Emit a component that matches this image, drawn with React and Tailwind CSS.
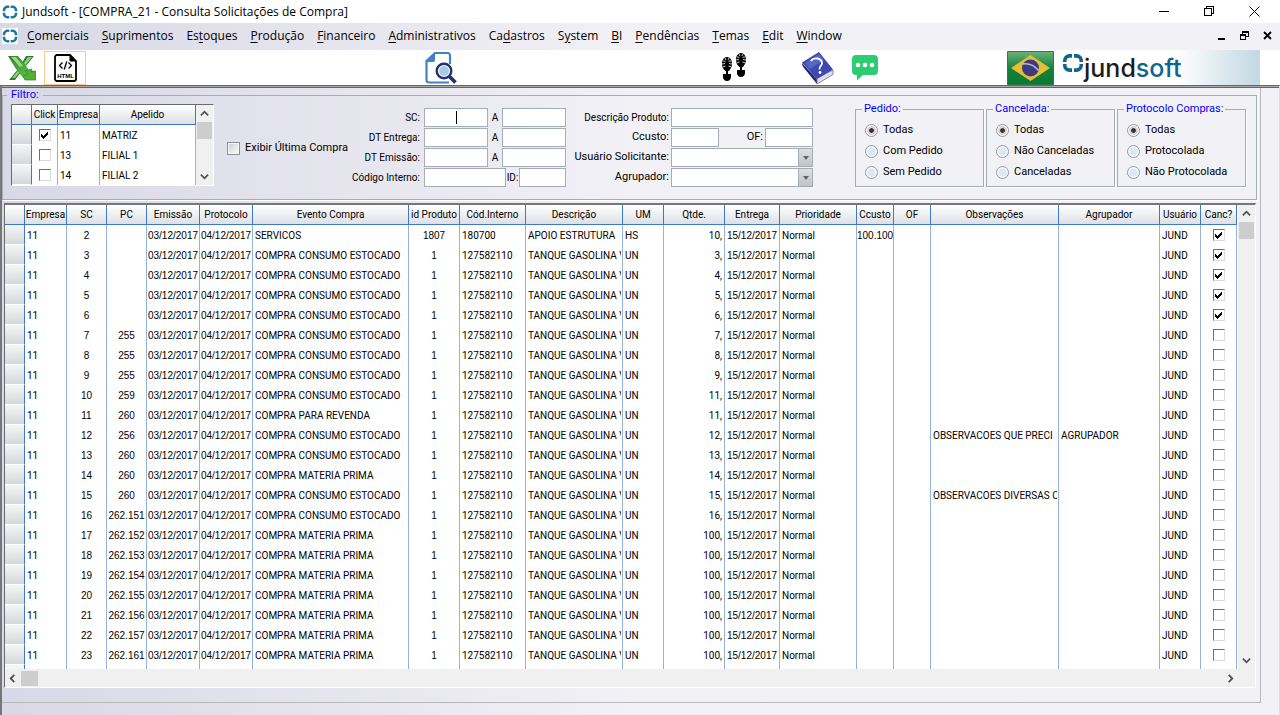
import { useState } from "react";
import clsx from "clsx";

const MENUS = [
  ["", "C", "omerciais"],
  ["", "S", "uprimentos"],
  ["Es", "t", "oques"],
  ["", "P", "rodução"],
  ["", "F", "inanceiro"],
  ["", "A", "dministrativos"],
  ["Ca", "d", "astros"],
  ["S", "y", "stem"],
  ["", "B", "I"],
  ["", "P", "endências"],
  ["", "T", "emas"],
  ["", "E", "dit"],
  ["", "W", "indow"],
];

// figures use the narrower digits of Liberation Sans
const NUM = "text-center font-['Liberation_Sans',sans-serif]";

const COLUMNS = [
  { key: "empresa", label: "Empresa", col: "w-[42px]" },
  { key: "sc", label: "SC", col: "w-[40px]", cell: NUM },
  { key: "pc", label: "PC", col: "w-[40px]", cell: NUM },
  { key: "emissao", label: "Emissão", col: "w-[53px]", cell: NUM },
  { key: "protocolo", label: "Protocolo", col: "w-[53px]", cell: NUM },
  { key: "evento", label: "Evento Compra", col: "w-[156px]" },
  { key: "produto", label: "id Produto", col: "w-[51px]", cell: NUM },
  { key: "codigo", label: "Cód.Interno", col: "w-[66px]" },
  { key: "descricao", label: "Descrição", col: "w-[97px]" },
  { key: "um", label: "UM", col: "w-[41px]" },
  { key: "qtde", label: "Qtde.", col: "w-[61px]", cell: "text-right pr-[2px]" },
  { key: "entrega", label: "Entrega", col: "w-[55px]", cell: NUM },
  { key: "prioridade", label: "Prioridade", col: "w-[77px]" },
  { key: "ccusto", label: "Ccusto", col: "w-[37px]", cell: NUM },
  { key: "of", label: "OF", col: "w-[37px]" },
  { key: "obs", label: "Observações", col: "w-[128px]" },
  { key: "agrupador", label: "Agrupador", col: "w-[101px]" },
  { key: "usuario", label: "Usuário", col: "w-[41px]" },
];

const CONSUMO = "COMPRA CONSUMO ESTOCADO";
const MATERIA = "COMPRA MATERIA PRIMA";

const base = {
  empresa: "11",
  emissao: "03/12/2017",
  protocolo: "04/12/2017",
  produto: "1",
  codigo: "127582110",
  descricao: "TANQUE GASOLINA V",
  um: "UN",
  entrega: "15/12/2017",
  prioridade: "Normal",
  usuario: "JUND",
};

const ROWS = [
  { sc: 2, evento: "SERVICOS", produto: "1807", codigo: "180700", descricao: "APOIO ESTRUTURA", um: "HS", qtde: "10,", ccusto: "100.100", canc: true },
  { sc: 3, evento: CONSUMO, qtde: "3,", canc: true },
  { sc: 4, evento: CONSUMO, qtde: "4,", canc: true },
  { sc: 5, evento: CONSUMO, qtde: "5,", canc: true },
  { sc: 6, evento: CONSUMO, qtde: "6,", canc: true },
  { sc: 7, pc: "255", evento: CONSUMO, qtde: "7," },
  { sc: 8, pc: "255", evento: CONSUMO, qtde: "8," },
  { sc: 9, pc: "255", evento: CONSUMO, qtde: "9," },
  { sc: 10, pc: "259", evento: CONSUMO, qtde: "11," },
  { sc: 11, pc: "260", evento: "COMPRA PARA REVENDA", qtde: "11," },
  { sc: 12, pc: "256", evento: CONSUMO, qtde: "12,", obs: "OBSERVACOES QUE PRECI", agrupador: "AGRUPADOR" },
  { sc: 13, pc: "260", evento: CONSUMO, qtde: "13," },
  { sc: 14, pc: "260", evento: MATERIA, qtde: "14," },
  { sc: 15, pc: "260", evento: CONSUMO, qtde: "15,", obs: "OBSERVACOES DIVERSAS C" },
  { sc: 16, pc: "262.151", evento: CONSUMO, qtde: "16," },
  { sc: 17, pc: "262.152", evento: MATERIA, qtde: "100," },
  { sc: 18, pc: "262.153", evento: MATERIA, qtde: "100," },
  { sc: 19, pc: "262.154", evento: MATERIA, qtde: "100," },
  { sc: 20, pc: "262.155", evento: MATERIA, qtde: "100," },
  { sc: 21, pc: "262.156", evento: MATERIA, qtde: "100," },
  { sc: 22, pc: "262.157", evento: MATERIA, qtde: "100," },
  { sc: 23, pc: "262.161", evento: MATERIA, qtde: "100," },
].map((r) => ({ ...base, ...r }));

const EMPRESAS = [
  { id: "11", apelido: "MATRIZ", checked: true },
  { id: "13", apelido: "FILIAL 1" },
  { id: "14", apelido: "FILIAL 2" },
];

const TH =
  "h-5 overflow-hidden whitespace-nowrap border-r border-b border-[#3f78c4] bg-linear-to-b from-white to-[#dde0e4] p-0 text-center font-normal";
const GUTTER =
  "h-5 border-r border-b border-r-[#3f78c4] border-b-white bg-linear-to-b from-[#f4f5f6] to-[#d4d7dc] p-0";
const TD = "h-5 overflow-hidden whitespace-nowrap border-r border-[#94b3dc]";
const INPUT = "h-[19px] border border-[#a4adb5] bg-white px-1 text-[11px] outline-none";

function JundMark({ className }) {
  return (
    <svg viewBox="0 0 16 16" className={className} fill="none" stroke="currentColor" strokeWidth="2.6">
      <path d="M7.300 2.800H5.500a3.500 3.500 0 0 0-3.500 3.500V7.300M8.700 2.800h1.800A3.500 3.500 0 0 1 14 6.300v1M7.300 13.200H5.500A3.500 3.500 0 0 1 2 9.700V8.700M8.700 13.200h1.800A3.500 3.500 0 0 0 14 9.700V8.700" />
    </svg>
  );
}

function CheckCell({ label, checked }) {
  const [on, setOn] = useState(!!checked);
  return (
    <span className="grid justify-center">
      <input
        type="checkbox"
        aria-label={label}
        checked={on}
        onChange={(e) => setOn(e.target.checked)}
        className="peer col-start-1 row-start-1 size-3 appearance-none border border-t-[#707070] border-r-[#dcdcdc] border-b-[#dcdcdc] border-l-[#707070] bg-white"
      />
      <svg
        viewBox="0 0 8 8"
        shapeRendering="crispEdges"
        className="pointer-events-none invisible col-start-1 row-start-1 size-2 place-self-center peer-checked:visible"
      >
        <path d="M0 3h1v1h1v1h1v-1h1v-1h1v-1h1v-1h1v3h-1v1h-1v1h-1v1h-1v1h-1v-1h-1v-1h-1z" fill="#000" />
      </svg>
    </span>
  );
}

function Arrow({ dir }) {
  const d = {
    up: "M1 7l4-4 4 4",
    down: "M1 3l4 4 4-4",
    left: "M7 1L3 5l4 4",
    right: "M3 1l4 4-4 4",
  }[dir];
  return (
    <svg viewBox="0 0 10 10" className="size-[9px]" fill="none" stroke="#505050" strokeWidth="2">
      <path d={d} />
    </svg>
  );
}

function VScroll() {
  return (
    <div className="flex w-[17px] shrink-0 flex-col items-center bg-[#f0f0f0]">
      <button type="button" aria-label="Rolar para cima" className="flex h-[17px] items-center">
        <Arrow dir="up" />
      </button>
      <div className="h-[17px] w-[15px] bg-[#cdcdcd]" />
      <button type="button" aria-label="Rolar para baixo" className="mt-auto flex h-[17px] items-center">
        <Arrow dir="down" />
      </button>
    </div>
  );
}

function TitleBar() {
  return (
    <header className="flex h-[23px] items-center bg-white pr-5 pl-[2px] text-[12px]">
      <JundMark className="size-4 text-[#1b7a9b]" />
      <h1 className="ml-1 grow">Jundsoft - [COMPRA_21 - Consulta Solicitações de Compra]</h1>
      <div className="flex items-center gap-[34px]">
        <button type="button" aria-label="Minimizar">
          <svg viewBox="0 0 11 11" className="size-[11px]" shapeRendering="crispEdges">
            <path d="M0 5h10v1H0z" />
          </svg>
        </button>
        <button type="button" aria-label="Restaurar">
          <svg viewBox="0 0 11 11" className="size-[11px]" fill="none" stroke="#000" shapeRendering="crispEdges">
            <path d="M.5 2.500h7v7h-7zM2.500 2.500v-2h7v7h-2" />
          </svg>
        </button>
        <button type="button" aria-label="Fechar">
          <svg viewBox="0 0 11 11" className="size-[11px]" fill="none" stroke="#000">
            <path d="M.5.5l10 10M10.500.5l-10 10" />
          </svg>
        </button>
      </div>
    </header>
  );
}

function MenuBar() {
  return (
    <nav className="flex h-[27px] items-center bg-linear-to-r from-[#d8d8e6] to-[#f2f1f6] to-50% pr-2 pb-[2px] pl-[2px] text-[12px]">
      <JundMark className="size-4 bg-white text-[#1b7a9b]" />
      <div className="flex grow gap-[13px] pl-[9px]">
        {MENUS.map(([pre, key, post]) => (
          <button type="button" key={pre + key + post}>
            {pre}
            <u className="underline-offset-2">{key}</u>
            {post}
          </button>
        ))}
      </div>
      <div className="flex items-center gap-[14px]">
        <button type="button" aria-label="Minimizar janela">
          <svg viewBox="0 0 9 9" className="size-[9px]" shapeRendering="crispEdges">
            <path d="M1 7h7v2H1z" />
          </svg>
        </button>
        <button type="button" aria-label="Restaurar janela">
          <svg viewBox="0 0 9 9" className="size-[9px]" shapeRendering="crispEdges">
            <path d="M2 0h7v6H6v3H0V3h2zM3 2v1h3v2h2V2zM1 5v3h4V5z" fillRule="evenodd" />
          </svg>
        </button>
        <button type="button" aria-label="Fechar janela">
          <svg viewBox="0 0 9 9" className="size-[9px]" fill="none" stroke="#000" strokeWidth="1.800">
            <path d="M1 1l7 7M8 1L1 8" />
          </svg>
        </button>
      </div>
    </nav>
  );
}

function ExcelIcon() {
  return (
    <svg viewBox="0 0 28 26" className="h-[26px] w-7">
      <defs>
        <linearGradient id="xl" x1="0" y1="0" x2="1" y2="1">
          <stop offset="0" stopColor="#2f7d32" />
          <stop offset=".55" stopColor="#4fae3c" />
          <stop offset="1" stopColor="#6cc544" />
        </linearGradient>
      </defs>
      <path d="M18 1h8l-9 11-7 9-3 4H1l10-12z" fill="#2c7f33" />
      <path d="M20 2h4l-9 11-8 10H4l9-11z" fill="#8fcf78" />
      <path d="M0 1h10l6 7 5 7 6 1v9H17L8 14z" fill="url(#xl)" />
      <path d="M3 2h5l7 9-3 1z" fill="#9ad684" />
      <path d="M17 16l7-2-1 3 5-1v9H17l-2-4 5-2z" fill="#52b03a" stroke="#2b8a2e" strokeWidth=".7" />
    </svg>
  );
}

function HtmlIcon() {
  return (
    <svg viewBox="0 0 23 28" className="h-7 w-[23px]">
      <path d="M3 1h13l6 6v18a2 2 0 0 1-2 2H3a2 2 0 0 1-2-2V3a2 2 0 0 1 2-2z" fill="#fff" stroke="#000" strokeWidth="1.800" />
      <path d="M16 1v6h6z" fill="#000" stroke="#000" />
      <path d="M8.500 8.500L5.500 11.500l3 3M14.500 8.500l3 3-3 3M12.800 7.500l-2.600 8" fill="none" stroke="#000" strokeWidth="1.300" />
      <text x="11.500" y="23.500" textAnchor="middle" fontSize="6" fontWeight="bold" fontFamily="Liberation Sans, sans-serif">
        HTML
      </text>
    </svg>
  );
}

function SearchDocIcon() {
  return (
    <svg viewBox="0 0 32 32" className="size-8" fill="none">
      <path d="M25 12V3.500A2.500 2.500 0 0 0 22.500 1H10L1.500 9v19A2.500 2.500 0 0 0 4 30.500h20" stroke="#3f83c5" strokeWidth="2.200" />
      <path d="M10 1L1 10h7a2 2 0 0 0 2-2z" fill="#3f83c5" />
      <circle cx="19" cy="19" r="7.300" fill="#fff" stroke="#27316b" strokeWidth="2.400" />
      <circle cx="19" cy="19" r="5" fill="#a5cbe9" />
      <path d="M24.500 24.500l6 6" stroke="#27316b" strokeWidth="3.800" />
    </svg>
  );
}

function Foot() {
  return (
    <g>
      <path d="M5 0c3 0 5 3 5 7 0 3-1 4-3 7H3.500C1 12 0 10 0 7c0-4 2-7 5-7z" fill="#000" />
      <path d="M.5 10l3-1M0 7l3-.5M1 4l2.500.3M3 1l1 2M9.500 10l-3-1M10 7L7 6.500M9 4l-2.500.3M7 1L6 3" stroke="#fff" strokeWidth=".8" />
      <path d="M4 12h2v5h3v3c0 2-1.500 4-4 4s-4-2-4-4v-3h3z" fill="#000" />
    </g>
  );
}

function FeetIcon() {
  return (
    <svg viewBox="0 0 25 29" className="h-[29px] w-[25px]">
      <g transform="translate(0 4)">
        <Foot />
      </g>
      <g transform="translate(14 0)">
        <Foot />
      </g>
    </svg>
  );
}

function BookIcon() {
  return (
    <svg viewBox="0 0 32 32" className="size-8">
      <path d="M0 11l15 16v5L2 16c-1-1-2-3-2-5z" fill="#23286f" />
      <path d="M15 26l16-8v4.500L15 32z" fill="#dcdde8" stroke="#6d70a0" strokeWidth=".8" />
      <path d="M0 10.500L17 0l14 17.500L15 27z" fill="#3d49b0" />
      <path d="M3 11L17 2l5 6L8 17z" fill="#6c78d0" opacity=".6" />
      <path d="M9 9c1-2 4-3 6.500-2.500s5 2.500 4.500 5-3 3-2.500 6" fill="none" stroke="#fff" strokeWidth="1.800" />
      <circle cx="18" cy="20.500" r="1.400" fill="#fff" />
    </svg>
  );
}

function ChatIcon() {
  return (
    <svg viewBox="0 0 26 26" className="size-[26px]">
      <path d="M4 0h18a4 4 0 0 1 4 4v12a4 4 0 0 1-4 4H11l-6 5.500V20H4a4 4 0 0 1-4-4V4a4 4 0 0 1 4-4z" fill="#2ecc71" />
      <g fill="#fff">
        <circle cx="6" cy="10" r="2.300" />
        <circle cx="13" cy="10" r="2.300" />
        <circle cx="20" cy="10" r="2.300" />
      </g>
    </svg>
  );
}

function FlagIcon() {
  return (
    <svg viewBox="0 0 47 34" className="h-[34px] w-[47px]">
      <defs>
        <linearGradient id="flag" x1="0" y1="0" x2="0" y2="1">
          <stop offset="0" stopColor="#6bb27a" />
          <stop offset=".5" stopColor="#17813a" />
          <stop offset="1" stopColor="#087a33" />
        </linearGradient>
      </defs>
      <path d="M.5.5h46v33H.5z" fill="url(#flag)" stroke="#2c7a48" />
      <path d="M4 17L23.500 4 43 17 23.500 30z" fill="#e6be35" />
      <circle cx="23.500" cy="17" r="8.500" fill="#3c3a80" />
      <path d="M15.500 13c6-1 12 1.500 16 6.500" fill="none" stroke="#b5bbd8" strokeWidth="1.500" />
    </svg>
  );
}

function Toolbar() {
  return (
    <div className="flex h-[35px] items-center bg-white pl-2">
      <button type="button" aria-label="Exportar para Excel">
        <ExcelIcon />
      </button>
      <button
        type="button"
        aria-label="Exportar para HTML"
        className="ml-2 flex h-[34px] w-[42px] items-center justify-center border border-[#fbc98b]"
      >
        <HtmlIcon />
      </button>
      <div className="grow-[339]" />
      <button type="button" aria-label="Consultar">
        <SearchDocIcon />
      </button>
      <div className="grow-[266]" />
      <button type="button" aria-label="Passo a passo">
        <FeetIcon />
      </button>
      <div className="grow-[55]" />
      <button type="button" aria-label="Ajuda">
        <BookIcon />
      </button>
      <div className="grow-[18]" />
      <button type="button" aria-label="Mensagens">
        <ChatIcon />
      </button>
      <div className="grow-[129]" />
      <button type="button" aria-label="Idioma: Português">
        <FlagIcon />
      </button>
      <div className="mr-5 flex h-full w-[206px] border-r border-[#cfd8de] bg-linear-to-r from-white from-60% to-[#c3d8e3] pl-2">
        <JundMark className="mt-[2px] size-[22px] text-[#0f658c]" />
        <span className="font-[Inter,sans-serif] text-[25px] leading-[37px] font-medium text-[#1c1c1e]">
          jund<span className="text-[#0f658c]">soft</span>
        </span>
      </div>
    </div>
  );
}

function EmpresaGrid() {
  return (
    <div className="flex w-[203px] shrink-0 border border-t-[#6b6b6b] border-r-white border-b-white border-l-[#6b6b6b] bg-white text-[10px]">
      <div className="min-w-0 grow">
        <table className="w-full table-fixed border-separate border-spacing-0 leading-[19px]">
          <colgroup>
            <col className="w-5" />
            <col className="w-[26px]" />
            <col className="w-[42px]" />
            <col />
          </colgroup>
          <thead>
            <tr>
              <th className={TH}></th>
              <th className={TH}>Click</th>
              <th className={TH}>Empresa</th>
              <th className={TH}>Apelido</th>
            </tr>
          </thead>
          <tbody>
            {EMPRESAS.map((e) => (
              <tr key={e.id}>
                <td className={GUTTER}></td>
                <td className={TD}>
                  <CheckCell label={`Empresa ${e.id}`} checked={e.checked} />
                </td>
                <td className={clsx(TD, "pl-[2px]")}>{e.id}</td>
                <td className={clsx(TD, "pl-[2px]")}>{e.apelido}</td>
              </tr>
            ))}
          </tbody>
        </table>
      </div>
      <VScroll />
    </div>
  );
}

function RangeRow({ id, label, active }) {
  return (
    <div className="flex items-center">
      <label htmlFor={id} className="w-[70px] text-right">
        {label}
      </label>
      <div className="relative ml-1 flex">
        <input id={id} className={clsx(INPUT, "w-16 text-center", active && "caret-transparent")} />
        {active && <span className="pointer-events-none absolute inset-y-[3px] left-1/2 w-px bg-black" />}
      </div>
      <label htmlFor={`${id}-ate`} className="w-[14px] text-center">
        A
      </label>
      <input id={`${id}-ate`} className={clsx(INPUT, "w-16")} />
    </div>
  );
}

function SelectRow({ id, label }) {
  return (
    <div className="flex items-center">
      <label htmlFor={id} className="w-[95px] text-right text-[11px]">
        {label}
      </label>
      <div className="ml-[2px] flex w-[142px]">
        <select id={id} className="h-[19px] min-w-0 grow appearance-none border border-[#a4adb5] bg-white px-1 outline-none">
          <option></option>
        </select>
        <div className="flex h-[19px] w-[14px] items-center justify-center border-y border-r border-[#a4adb5] bg-linear-to-b from-[#dcdfe4] to-[#bfc4cc]">
          <svg viewBox="0 0 6 4" className="h-1 w-[6px]">
            <path d="M0 0h6L3 4z" fill="#666" />
          </svg>
        </div>
      </div>
    </div>
  );
}

function RadioGroup({ name, title, options }) {
  return (
    <fieldset className="-mt-[3px] h-[86px] w-[129px] border border-[#a4adb5] px-[9px] shadow-[1px_1px_0_#fff]">
      <legend className="-ml-[3px] px-[2px] text-[11px] leading-4 text-[#0000ff]">{title}</legend>
      <div className="flex flex-col pt-[3px]">
        {options.map((o, i) => (
          <label key={o} className="flex h-[21px] items-center gap-[5px] text-[11px]">
            <input
              type="radio"
              name={name}
              defaultChecked={i === 0}
              className="size-[13px] appearance-none rounded-full border border-[#8d9ba6] bg-[radial-gradient(circle,#dce9f3_0_45%,#f8fafb_60%)] checked:bg-[radial-gradient(circle,#253352_0_25%,#e6cdb8_35%_50%,#f8fafb_60%)]"
            />
            {o}
          </label>
        ))}
      </div>
    </fieldset>
  );
}

function Filtro() {
  return (
    <fieldset className="mr-[3px] min-w-0 border border-[#a4adb5] pr-[10px] pl-1 shadow-[1px_1px_0_#fff]">
      <legend className="px-1 text-[11px] leading-[14px] text-[#0000ff]">Filtro:</legend>
      <div className="flex h-[97px] items-start pt-[2px] pl-1 whitespace-nowrap">
        <EmpresaGrid />
        <label className="mt-9 ml-[13px] flex items-center gap-[5px] text-[11px] leading-4">
          <input
            type="checkbox"
            className="size-[13px] appearance-none border border-[#8d9399] bg-linear-to-br from-[#c9cdd6] to-white shadow-[inset_0_0_0_1px_#f6f6f8]"
          />
          Exibir Última Compra
        </label>
        {/* pushed right so both field blocks keep their distance to the radio groups */}
        <div className="mt-1 ml-auto flex flex-col gap-px text-[10px]">
          <RangeRow id="sc" label="SC:" active />
          <RangeRow id="dt-entrega" label="DT Entrega:" />
          <RangeRow id="dt-emissao" label="DT Emissão:" />
          <div className="flex items-center">
            <label htmlFor="codigo" className="w-[70px] text-right">
              Código Interno:
            </label>
            <input id="codigo" className={clsx(INPUT, "ml-1 w-[82px]")} />
            <label htmlFor="cod-id" className="w-[13px] text-center">
              ID:
            </label>
            <input id="cod-id" className={clsx(INPUT, "w-[47px]")} />
          </div>
        </div>
        <div className="mt-1 mr-[42px] ml-2 flex flex-col gap-px text-[10px]">
          <div className="flex items-center">
            <label htmlFor="descricao" className="w-[95px] text-right">
              Descrição Produto:
            </label>
            <input id="descricao" className={clsx(INPUT, "ml-[2px] w-[142px]")} />
          </div>
          <div className="flex items-center text-[11px]">
            <label htmlFor="ccusto" className="w-[95px] text-right">
              Ccusto:
            </label>
            <input id="ccusto" className={clsx(INPUT, "ml-[2px] w-12")} />
            <label htmlFor="of" className="w-11 text-right">
              OF:
            </label>
            <input id="of" className={clsx(INPUT, "ml-[2px] w-12")} />
          </div>
          <SelectRow id="usuario" label="Usuário Solicitante:" />
          <SelectRow id="agrupador" label="Agrupador:" />
        </div>
        <div className="flex gap-[2px]">
          <RadioGroup name="pedido" title="Pedido:" options={["Todas", "Com Pedido", "Sem Pedido"]} />
          <RadioGroup name="cancelada" title="Cancelada:" options={["Todas", "Não Canceladas", "Canceladas"]} />
          <RadioGroup name="protocolo" title="Protocolo Compras:" options={["Todas", "Protocolada", "Não Protocolada"]} />
        </div>
      </div>
    </fieldset>
  );
}

function Solicitacoes() {
  return (
    <div className="mt-[3px] mr-1 ml-[2px] border border-t-2 border-t-[#77777b] border-r-white border-b-white border-l-[#6b6b6b] bg-white text-[10px]">
      <div className="flex">
        <div className="min-w-0 grow">
          <table className="w-full table-fixed border-separate border-spacing-0 leading-[19px]">
            <colgroup>
              <col className="w-5" />
              {COLUMNS.map((c) => (
                <col key={c.key} className={c.col} />
              ))}
              <col className="w-9" />
            </colgroup>
            <thead>
              <tr>
                <th className={TH}></th>
                {COLUMNS.map((c) => (
                  <th key={c.key} className={TH}>
                    {c.label}
                  </th>
                ))}
                <th className={TH}>Canc?</th>
              </tr>
            </thead>
            <tbody>
              {ROWS.map((r) => (
                <tr key={r.sc}>
                  <td className={GUTTER}></td>
                  {COLUMNS.map((c) => (
                    <td key={c.key} className={clsx(TD, c.cell || "pr-px pl-[2px]")}>
                      <div className="overflow-hidden">{r[c.key]}</div>
                    </td>
                  ))}
                  <td className={TD}>
                    <CheckCell label={`SC ${r.sc} cancelada`} checked={r.canc} />
                  </td>
                </tr>
              ))}
              <tr aria-hidden="true">
                <td className="h-1 border-r border-[#3f78c4] bg-[#f4f5f6] p-0"></td>
                {COLUMNS.map((c) => (
                  <td key={c.key} className="border-r border-[#94b3dc] p-0"></td>
                ))}
                <td className="border-r border-[#94b3dc] p-0"></td>
              </tr>
            </tbody>
          </table>
        </div>
        <div className="flex pl-px">
          <VScroll />
        </div>
      </div>
      <div className="flex h-[18px] items-center bg-[#f0f0f0] pr-5 pl-[3px]">
        <button type="button" aria-label="Rolar para a esquerda">
          <Arrow dir="left" />
        </button>
        <div className="ml-1 h-[15px] w-[17px] bg-[#cdcdcd]" />
        <button type="button" aria-label="Rolar para a direita" className="ml-auto">
          <Arrow dir="right" />
        </button>
      </div>
    </div>
  );
}

export default function App() {
  return (
    <div className="flex min-h-screen flex-col overflow-hidden font-['Open_Sans','Noto_Sans',sans-serif] text-black">
      <TitleBar />
      <MenuBar />
      <Toolbar />
      <main className="grow border-t border-r border-l-2 border-t-[#666] border-r-[#dcdce0] border-l-[#77777b] bg-linear-to-r from-[#d8d8e6] to-[#f2f1f6] to-50% pt-[2px] pr-[18px] font-[Roboto,sans-serif] shadow-[inset_0_1px_0_#a8a8a8,inset_0_2px_0_#666]">
        <div className="border-r border-b border-[#b9b9bd] pb-[14px]">
          <Filtro />
          <Solicitacoes />
        </div>
      </main>
    </div>
  );
}
